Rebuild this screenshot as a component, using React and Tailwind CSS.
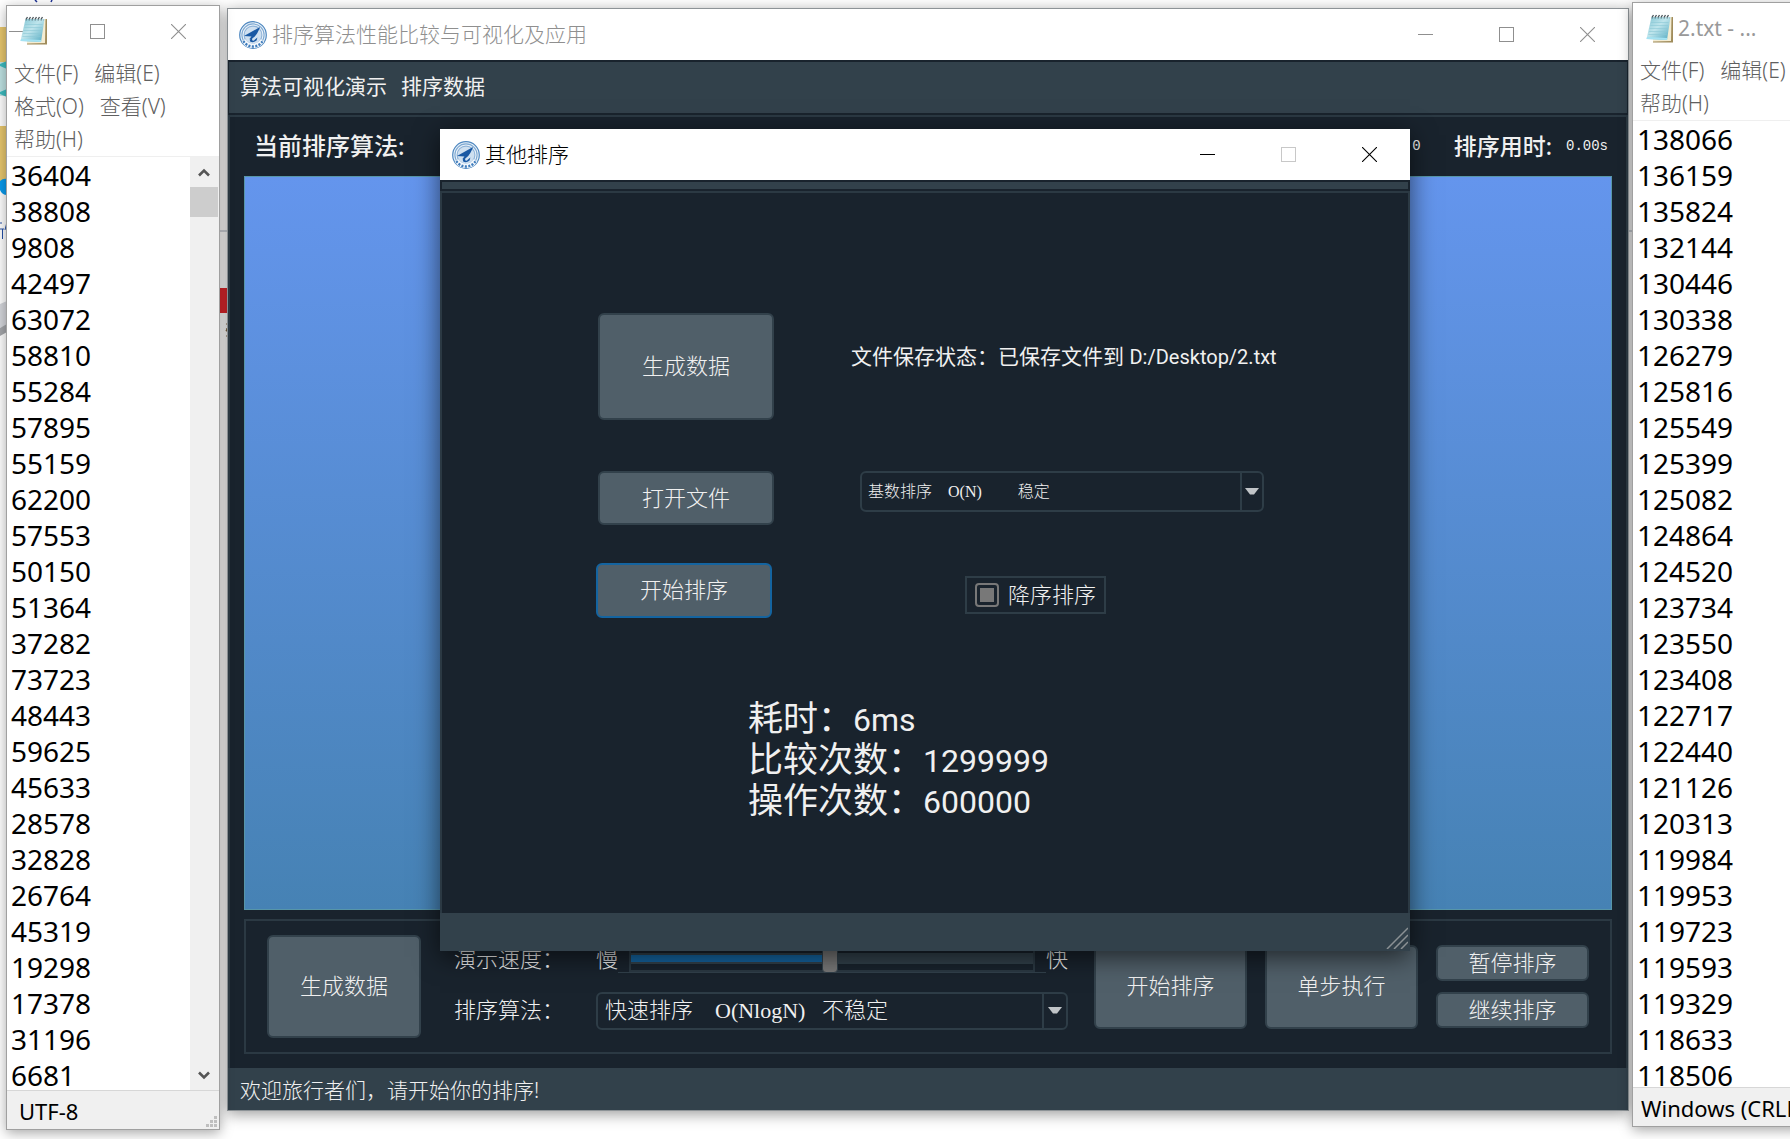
import React from "react";

const LEFT_NUMBERS = [
  36404, 38808, 9808, 42497, 63072, 58810, 55284, 57895, 55159, 62200, 57553, 50150, 51364,
  37282, 73723, 48443, 59625, 45633, 28578, 32828, 26764, 45319, 19298, 17378, 31196, 6681,
];

const RIGHT_NUMBERS = [
  138066, 136159, 135824, 132144, 130446, 130338, 126279, 125816, 125549, 125399, 125082,
  124864, 124520, 123734, 123550, 123408, 122717, 122440, 121126, 120313, 119984, 119953,
  119723, 119593, 119329, 118633, 118506,
];

function NotepadIcon() {
  return (
    <svg viewBox="0 0 28 30" className="h-[30px] w-7 shrink-0" aria-hidden="true">
      <defs>
        <linearGradient id="page" x1="0" y1="0" x2="1" y2="1">
          <stop offset="0" stopColor="#7fc3d2" />
          <stop offset="0.45" stopColor="#bfe5ec" />
          <stop offset="1" stopColor="#4fa8c0" />
        </linearGradient>
      </defs>
      <path d="M8 4 L27 3 L27 28.5 L7 28.5 Z" fill="#a08c5b" />
      <path d="M7 4 L25.5 3 L25 27 L7 27.5 Z" fill="#f4ecd2" />
      <path d="M5.5 3 L24.5 3 L21 26 L0.5 25 Z" fill="url(#page)" />
      <path d="M0.5 25 L21 26 L21.3 24 L1 23 Z" fill="#a5e2f2" />
      <path d="M5 8.5 H22.5 M4.3 11.5 H22 M3.7 14.5 H21.5 M3.1 17.5 H21 M2.5 20.5 H20.6" stroke="#8cc8d5" strokeWidth="0.6" />
      <path d="M6 3.4 L7.5 1 M9 3.4 L10.5 1 M12 3.4 L13.5 1 M15 3.4 L16.5 1 M18 3.4 L19.5 1 M21 3.4 L22.5 1" stroke="#4a565c" strokeWidth="1.3" />
      <path d="M5.5 4 H24" stroke="#5d757c" strokeWidth="0.8" strokeDasharray="1.5 1.5" />
    </svg>
  );
}

function SchoolLogo() {
  return (
    <svg viewBox="0 0 28 28" className="size-7 shrink-0" aria-hidden="true">
      <circle cx="14" cy="14" r="13.3" fill="#eaf2f9" stroke="#4f88c0" strokeWidth="1.2" />
      <circle cx="14" cy="14" r="11.1" fill="none" stroke="#7fa9d2" strokeWidth="1.1" />
      <circle cx="14" cy="14" r="8.9" fill="#cfe0f0" stroke="#8fb3d8" strokeWidth="1.1" />
      <path d="M4.6 19.5 A11 11 0 0 0 23.4 19.5" fill="none" stroke="#f4f8fc" strokeWidth="4.4" />
      <path d="M4.4 20.2 A11.3 11.3 0 0 0 23.6 20.2" fill="none" stroke="#3f7cbc" strokeWidth="2.4" strokeDasharray="2 1.4" />
      <path d="M21 6 L5 15 L12.5 15.4 L10 18.6 L14.5 16.6 Q18.5 13.5 21 6 Z" fill="#1a59a4" />
      <path d="M21 6 L15.5 14.6 Q12.6 17.6 13.2 19.2 Q14.4 20.4 16 18.4 L18.4 16.6 L17.6 19.6 Q14.2 22.2 11.2 20.4 Q10 18 13.5 15 Z" fill="#1a59a4" />
    </svg>
  );
}

function CaptionButtons({ tone, maxTone }) {
  return (
    <div className={"flex h-full shrink-0 " + tone}>
      <button type="button" aria-label="最小化" className="flex w-[81px] items-center justify-center">
        <svg width="15" height="15" shapeRendering="crispEdges"><path d="M0 7.5 H15" stroke="currentColor" /></svg>
      </button>
      <button type="button" aria-label="最大化" className={"flex w-[81px] items-center justify-center " + maxTone}>
        <svg width="15" height="15" shapeRendering="crispEdges"><path d="M0.5 0.5 H14.5 V14.5 H0.5 Z" fill="none" stroke="currentColor" /></svg>
      </button>
      <button type="button" aria-label="关闭" className="flex w-[81px] items-center justify-center">
        <svg width="15" height="15"><path d="M0 0 L15 15 M15 0 L0 15" stroke="currentColor" strokeWidth="1.1" /></svg>
      </button>
    </div>
  );
}

function MenuRow({ items }) {
  return (
    <div className="flex h-[33px] items-center gap-4 pl-[7px]">
      {items.map((t) => (
        <button key={t} type="button" className="whitespace-nowrap">{t}</button>
      ))}
    </div>
  );
}

function NotepadText({ label, numbers }) {
  return (
    <textarea
      readOnly
      aria-label={label}
      value={numbers.join("\n")}
      className="block h-full min-w-0 flex-1 resize-none overflow-hidden bg-white pl-1 text-[28px] leading-9 text-black outline-none"
    />
  );
}

const darkButton =
  "shrink-0 rounded-md border-2 bg-[#505f69] pb-[3px] font-light text-[22px] leading-7 text-[#f0f0f0] ";

function Combo({ label, id, text, className, arrowWidth }) {
  return (
    <div className={"flex overflow-hidden rounded-md border-2 border-[#2e3d47] " + className}>
      <select
        id={id}
        aria-label={label}
        className="h-full min-w-0 flex-1 appearance-none bg-[#19232d] font-['Liberation_Serif','Noto_Sans_CJK_SC',serif] font-light text-[#f0f0f0] outline-none"
      >
        <option>{text}</option>
      </select>
      <span className={"flex shrink-0 items-center justify-center border-l-2 border-[#2e3d47] " + arrowWidth}>
        <svg width="14" height="7" viewBox="0 0 14 7" aria-hidden="true">
          <path d="M0 0 H14 L9 6.5 H5 Z" fill="#c0c4c7" />
        </svg>
      </span>
    </div>
  );
}

function DesktopRemnants() {
  return (
    <>
      <svg className="absolute left-0 top-0" width="64" height="345" aria-hidden="true">
        <rect x="0" y="27" width="7" height="35" fill="#e8c76d" />
        <rect x="0" y="62" width="7" height="34" fill="#bfe3e3" />
        <path d="M0 64 L7 61 V69 L0 66 Z M0 92 L7 89 V97 L0 94 Z" fill="#3dbcc0" />
        <rect x="0" y="126" width="7" height="60" fill="#e8c76d" />
        <path d="M0 181 Q3 178 7 179 V195 Q2 195 0 190 Z" fill="#0a9bee" />
        <path d="M0 223 H2 M0 229 H4 M2.5 229 V239 M5 230 L7 222 M6.5 226 V238" stroke="#2450a8" strokeWidth="1" fill="none" />
        <path d="M0 304 L7 301 V325 L0 328 Z" fill="#d5d7dc" />
        <path d="M0 328 L7 324 V332 L0 336 Z" fill="#a4a6aa" />
        <path d="M35 0 L37 2 M52 0 L51 2" stroke="#1b2f94" strokeWidth="1.5" />
      </svg>
      <div className="absolute left-[219px] top-[230px] h-0.5 w-3 bg-gray-300" />
      <div className="absolute right-[158px] top-[230px] h-0.5 w-1 bg-gray-300" />
      <svg className="absolute left-[219px] top-[288px]" width="9" height="52" aria-hidden="true">
        <rect width="9" height="25" fill="#e0282d" />
        <path d="M7 36 H9 M8 40 L7 43 H9 M7 48 H9" stroke="#8a6f4a" />
      </svg>
    </>
  );
}

function LeftNotepad() {
  return (
    <section className="absolute bottom-[9px] left-1.5 top-[5px] flex w-[214px] flex-col overflow-hidden border border-[#a0a0a0] bg-white shadow-[0_3px_12px_rgba(0,0,0,0.35)]">
      <header className="relative flex h-[51px] shrink-0 justify-end">
        <CaptionButtons tone="text-[#8f8f8f]" maxTone="" />
        <span className="absolute left-[13px] top-2.5"><NotepadIcon /></span>
      </header>
      <nav className="border-b border-[#efefef] text-[21px] font-light text-[#606060]">
        <MenuRow items={["文件(F)", "编辑(E)"]} />
        <MenuRow items={["格式(O)", "查看(V)"]} />
        <MenuRow items={["帮助(H)"]} />
      </nav>
      <div className="flex min-h-0 flex-1">
        <NotepadText label="排序前数据" numbers={LEFT_NUMBERS} />
        <div className="flex w-[29px] shrink-0 flex-col bg-[#f0f0f0] pr-px">
          <button type="button" aria-label="向上滚动" className="flex h-[30px] items-center justify-center">
            <svg width="12" height="9"><path d="M1 7.5 L6 2.5 L11 7.5" fill="none" stroke="#555" strokeWidth="2.6" /></svg>
          </button>
          <div className="h-[30px] bg-[#cdcdcd]" />
          <button type="button" aria-label="向下滚动" className="mt-auto flex h-[30px] items-center justify-center">
            <svg width="12" height="9"><path d="M1 1.5 L6 6.5 L11 1.5" fill="none" stroke="#555" strokeWidth="2.6" /></svg>
          </button>
        </div>
      </div>
      <footer className="flex h-[39px] shrink-0 items-center justify-between border-t border-[#d7d7d7] bg-[#f0f0f0] pl-3 text-[22px] text-black">
        <span className="pt-0.5">UTF-8</span>
        <svg width="11" height="11" className="mb-0.5 mr-0.5 self-end" fill="#bfbfbf" aria-hidden="true">
          <path d="M8 0h3v3h-3z M4 4h3v3h-3z M8 4h3v3h-3z M0 8h3v3h-3z M4 8h3v3h-3z M8 8h3v3h-3z" />
        </svg>
      </footer>
    </section>
  );
}

function RightNotepad() {
  return (
    <section className="absolute -right-[55px] bottom-3 top-0.5 flex w-[213px] flex-col overflow-hidden border border-[#a0a0a0] bg-white shadow-[0_3px_12px_rgba(0,0,0,0.35)]">
      <header className="flex h-[51px] shrink-0 items-center gap-1 pl-[13px] text-[21px] text-[#999]">
        <NotepadIcon />
        <span className="whitespace-nowrap">2.txt - ...</span>
      </header>
      <nav className="border-b border-[#efefef] text-[21px] font-light text-[#606060]">
        <MenuRow items={["文件(F)", "编辑(E)"]} />
        <MenuRow items={["帮助(H)"]} />
      </nav>
      <div className="flex min-h-0 flex-1">
        <NotepadText label="排序后数据" numbers={RIGHT_NUMBERS} />
      </div>
      <footer className="flex h-[39px] shrink-0 items-center whitespace-nowrap border-t border-[#d7d7d7] bg-[#f0f0f0] pl-2 text-[22px] text-black">
        <span className="pt-0.5">Windows (CRLF)</span>
      </footer>
    </section>
  );
}

function MainWindow() {
  return (
    <section className="absolute bottom-7 left-[227px] right-[161px] top-2 flex flex-col border border-[#8d9397] bg-[#19232d] text-[#f0f0f0] shadow-[0_3px_14px_rgba(0,0,0,0.4)]">
      <header className="flex h-[51px] shrink-0 items-center bg-white pl-[11px] text-[21px] font-light text-[#8f8f8f]">
        <SchoolLogo />
        <h1 className="ml-[5px] flex-1">排序算法性能比较与可视化及应用</h1>
        <CaptionButtons tone="text-[#8f8f8f]" maxTone="" />
      </header>
      <nav className="mt-0.5 flex h-[51px] shrink-0 items-center gap-3.5 border-x border-[#19232d] bg-[#32414b] pb-0.5 pl-[11px] text-[21px]">
        <button type="button">算法可视化演示</button>
        <button type="button">排序数据</button>
      </nav>
      <div className="mt-0.5 flex min-h-0 flex-1 flex-col border-x-2 border-t-2 border-[#2b3943] px-3.5 pb-3.5">
        <div className="flex h-[59px] shrink-0 items-center pb-px pl-2.5 pr-1 text-2xl font-medium">
          <span>当前排序算法:</span>
          <span className="ml-auto font-['Liberation_Mono',monospace] text-sm font-normal">0</span>
          <span className="ml-[33px] text-[23px]">排序用时:</span>
          <span className="ml-3.5 font-['Liberation_Mono',monospace] text-sm font-normal">0.00s</span>
        </div>
        <div className="min-h-0 flex-1 border border-[#5796a8] bg-linear-to-b from-[#6495ed] to-[#4682b4]" />
        <div className="mt-[9px] flex h-[135px] shrink-0 items-center border-2 border-[#2b3943] px-[21px] text-[22px] font-light">
          <button type="button" className={darkButton + "h-[103px] w-[154px] border-[#32414b]"}>生成数据</button>
          <div className="ml-[33px] grid flex-1 grid-cols-[142px_1fr] gap-y-[18px]">
            <label htmlFor="speed" className="flex h-[30px] items-center">演示速度：</label>
            <div className="flex h-[30px] items-center">
              <span>慢</span>
              <div className="flex flex-1 items-center border-b border-[#32414b] px-[11px]">
                <input
                  id="speed"
                  type="range"
                  min="0"
                  max="99"
                  defaultValue="49"
                  className="h-7 w-full appearance-none border-2 border-[#2b3943] bg-transparent [&::-webkit-slider-runnable-track]:h-[11px] [&::-webkit-slider-runnable-track]:border-y-2 [&::-webkit-slider-runnable-track]:border-[#32414b] [&::-webkit-slider-runnable-track]:bg-[linear-gradient(to_right,#1464a0_49%,#32414b_49%)] [&::-webkit-slider-thumb]:-mt-2.5 [&::-webkit-slider-thumb]:h-7 [&::-webkit-slider-thumb]:w-4 [&::-webkit-slider-thumb]:appearance-none [&::-webkit-slider-thumb]:rounded [&::-webkit-slider-thumb]:border [&::-webkit-slider-thumb]:border-[#32414b] [&::-webkit-slider-thumb]:bg-[#787878]"
                />
              </div>
              <span>快</span>
            </div>
            <label htmlFor="algorithm" className="flex h-[38px] items-center pb-0.5">排序算法：</label>
            <Combo
              id="algorithm"
              label="排序算法"
              text={"快速排序\u00a0\u00a0\u00a0\u00a0O(NlogN)\u00a0\u00a0\u00a0不稳定"}
              className="h-[38px] pl-[7px] text-[22px]"
              arrowWidth="w-6"
            />
          </div>
          <button type="button" className={darkButton + "ml-[26px] h-[84px] w-[153px] border-[#32414b]"}>开始排序</button>
          <button type="button" className={darkButton + "ml-[18px] h-[84px] w-[153px] border-[#32414b]"}>单步执行</button>
          <div className="ml-[18px] flex flex-col gap-[11px]">
            <button type="button" className={darkButton + "h-9 w-[153px] border-[#32414b]"}>暂停排序</button>
            <button type="button" className={darkButton + "h-9 w-[153px] border-[#32414b]"}>继续排序</button>
          </div>
        </div>
      </div>
      <footer className="flex h-[42px] shrink-0 items-center bg-[#32414b] pl-3 pt-[3px] text-[21px] font-light">
        欢迎旅行者们，请开始你的排序!
      </footer>
    </section>
  );
}

function SortDialog() {
  return (
    <section
      role="dialog"
      aria-label="其他排序"
      className="absolute bottom-[188px] left-[440px] right-[380px] top-[129px] flex flex-col bg-[#19232d] text-[#f0f0f0] shadow-[0_6px_24px_rgba(0,0,0,0.6)]"
    >
      <header className="flex h-[51px] shrink-0 items-center bg-white pl-3 text-[21px] text-black">
        <SchoolLogo />
        <h2 className="ml-[5px] flex-1 font-light">其他排序</h2>
        <CaptionButtons tone="text-black" maxTone="text-[#c8c8c8]" />
      </header>
      <div className="mx-0.5 mb-0.5 mt-0.5 h-[7px] shrink-0 bg-[#32414b]" />
      <div className="flex min-h-0 flex-1 flex-col border-x-2 border-t-2 border-[#2b3943]">
        <div className="flex items-start pl-[156px] pt-[120px]">
          <button type="button" className={darkButton + "h-[107px] w-44 border-[#32414b]"}>生成数据</button>
          <p className="ml-[77px] mt-[30px] whitespace-nowrap text-[21px] leading-[26px]">
            文件保存状态：已保存文件到 <span className="font-[Roboto,sans-serif] text-xl leading-none">D:/Desktop/2.txt</span>
          </p>
        </div>
        <div className="flex items-start pl-[156px] pt-[51px]">
          <button type="button" className={darkButton + "h-[54px] w-44 border-[#32414b]"}>打开文件</button>
          <Combo
            label="排序方式"
            text={"基数排序\u00a0\u00a0\u00a0\u00a0O(N)\u00a0\u00a0\u00a0\u00a0\u00a0\u00a0\u00a0\u00a0\u00a0稳定"}
            className="ml-[86px] h-[41px] w-[404px] pl-1.5 text-base"
            arrowWidth="w-[22px]"
          />
        </div>
        <div className="flex items-start pl-[154px] pt-[38px]">
          <button type="button" className={darkButton + "h-[55px] w-44 border-[#1464a0]"}>开始排序</button>
          <label className="ml-[193px] mt-[13px] flex h-[38px] items-center gap-[9px] border-2 border-[#2e3d47] px-2 text-[22px] font-light">
            <input
              type="checkbox"
              className="size-6 appearance-none rounded border-2 border-[#787878] bg-[#787878] bg-clip-content p-[3px]"
            />
            <span className="pb-0.5">降序排序</span>
          </label>
        </div>
        <div className="pl-[306px] pt-[79px] text-[35px] leading-[41px]">
          <p className="h-[41px]">耗时：<span className="font-[Roboto,sans-serif] text-[32px] leading-none">6ms</span></p>
          <p className="h-[41px]">比较次数：<span className="font-[Roboto,sans-serif] text-[32px] leading-none">1299999</span></p>
          <p className="h-[41px]">操作次数：<span className="font-[Roboto,sans-serif] text-[32px] leading-none">600000</span></p>
        </div>
      </div>
      <footer className="flex h-[38px] shrink-0 items-end justify-end bg-[#32414b] p-0.5">
        <svg width="22" height="22" stroke="#8b9194" strokeWidth="1.5" aria-hidden="true">
          <path d="M1 22 L22 1 M8 22 L22 8 M15 22 L22 15" />
        </svg>
      </footer>
    </section>
  );
}

export default function App() {
  return (
    <main className="relative h-screen w-full overflow-hidden bg-white font-['Noto_Sans','Noto_Sans_CJK_SC',sans-serif]">
      <DesktopRemnants />
      <MainWindow />
      <LeftNotepad />
      <RightNotepad />
      <SortDialog />
    </main>
  );
}
